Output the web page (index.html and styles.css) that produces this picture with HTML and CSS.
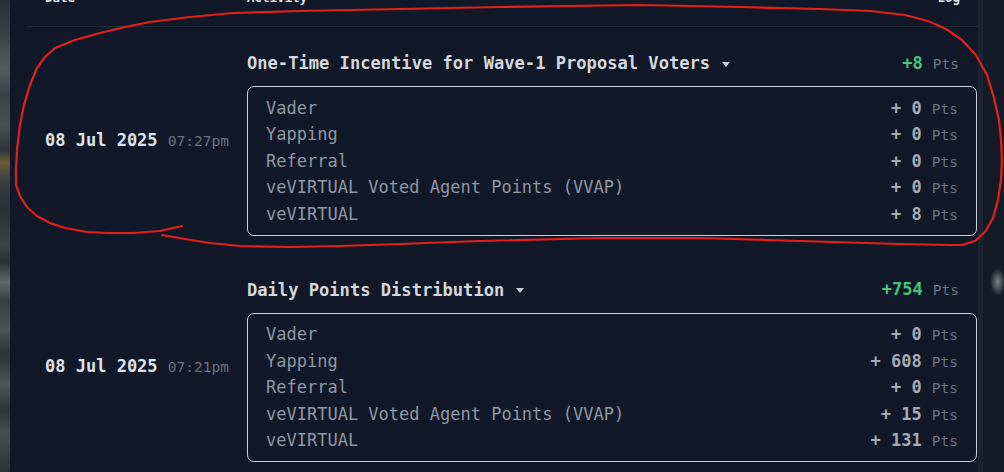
FILE: index.html
```html
<!DOCTYPE html>
<html lang="en">
<head>
<meta charset="utf-8">
<title>Points Log</title>
<link rel="stylesheet" href="styles.css">
</head>
<body>
<div class="page">
  <div class="bleed-left"></div>
  <main class="panel">
    <div class="table">
      <div class="thead">
        <div class="th th-date">Date</div>
        <div class="th th-activity">Activity</div>
        <div class="th th-log">Log</div>
      </div>

      <div class="row">
        <div class="cell-date"><span class="date">08 Jul 2025</span> <span class="time">07:27pm</span></div>
        <div class="cell-activity">
          <div class="act-head">
            <div class="act-title">One-Time Incentive for Wave-1 Proposal Voters<span class="caret"></span></div>
            <div class="act-total"><span class="gain">+8</span><span class="pts">Pts</span></div>
          </div>
          <div class="breakdown">
            <div class="line"><span class="label">Vader</span><span class="amount">+ 0</span><span class="pts">Pts</span></div>
            <div class="line"><span class="label">Yapping</span><span class="amount">+ 0</span><span class="pts">Pts</span></div>
            <div class="line"><span class="label">Referral</span><span class="amount">+ 0</span><span class="pts">Pts</span></div>
            <div class="line"><span class="label">veVIRTUAL Voted Agent Points (VVAP)</span><span class="amount">+ 0</span><span class="pts">Pts</span></div>
            <div class="line"><span class="label">veVIRTUAL</span><span class="amount">+ 8</span><span class="pts">Pts</span></div>
          </div>
        </div>
      </div>

      <div class="row">
        <div class="cell-date"><span class="date">08 Jul 2025</span> <span class="time">07:21pm</span></div>
        <div class="cell-activity">
          <div class="act-head">
            <div class="act-title">Daily Points Distribution<span class="caret"></span></div>
            <div class="act-total"><span class="gain">+754</span><span class="pts">Pts</span></div>
          </div>
          <div class="breakdown">
            <div class="line"><span class="label">Vader</span><span class="amount">+ 0</span><span class="pts">Pts</span></div>
            <div class="line"><span class="label">Yapping</span><span class="amount">+ 608</span><span class="pts">Pts</span></div>
            <div class="line"><span class="label">Referral</span><span class="amount">+ 0</span><span class="pts">Pts</span></div>
            <div class="line"><span class="label">veVIRTUAL Voted Agent Points (VVAP)</span><span class="amount">+ 15</span><span class="pts">Pts</span></div>
            <div class="line"><span class="label">veVIRTUAL</span><span class="amount">+ 131</span><span class="pts">Pts</span></div>
          </div>
        </div>
      </div>
    </div>
  </main>
  <div class="scrollbar"></div>
  <div class="bleed-right"></div>
</div>

<svg class="annotation" width="1004" height="472" viewBox="0 0 1004 472" aria-hidden="true">
  <polyline fill="none" stroke="#e3201b" stroke-width="2.2" stroke-linecap="round" stroke-linejoin="round"
    points="182,226 160,231 133,233 108,233 87,232 65,228 50,223 37,216 27,207 20,196 16,185 16,170 17,150 20,125 24,105 30,85 37,68 45,57 55,48 75,40 100,33 125,27 150,22 190,17 233,13 300,11 400,9 500,7 640,5 740,7 820,9 870,11 905,15 928,21 946,29 962,40 976,55 987,75 994,98 999,120 1001,140 1002,160 1001,180 998,200 993,218 985,232 975,241 962,245 950,245 900,244 800,241 700,238 600,238 480,241 400,244 340,246 290,247 240,246 210,243 185,239 162,235"/>
</svg>
</body>
</html>
```

FILE: styles.css
```css
html, body {
  margin: 0;
  padding: 0;
}

body {
  width: 1004px;
  height: 472px;
  overflow: hidden;
  background: #141a25;
  font-family: "DejaVu Sans Mono", "Liberation Mono", monospace;
  position: relative;
}

.page {
  display: flex;
  height: 472px;
  overflow: hidden;
}

.bleed-left {
  width: 10px;
  flex: none;
  background: linear-gradient(180deg,
    #2b3038 0px, #3a3f47 30px, #555a61 70px, #3c4149 95px,
    #4a4f56 125px, #2f343c 150px, #6b5a35 163px, #3a3f47 180px,
    #2a2f37 210px, #3e434a 245px, #2b3038 262px, #62666c 282px,
    #3a3f46 300px, #4c5057 330px, #2e333b 355px, #4e5259 385px,
    #30353d 410px, #484c53 435px, #2c3139 472px);
  filter: blur(0.6px);
}

.panel {
  width: 951px;
  flex: none;
  padding-left: 17px;
  background: #111827;
}

.scrollbar {
  width: 5px;
  flex: none;
  background: #1b2230;
}

.bleed-right {
  flex: 1;
  background: radial-gradient(ellipse 8px 14px at 70% 282px, #7b8088 0%, rgba(123,128,136,0) 100%), #151b26;
}

.table {
  margin-top: -10px;
}

.thead {
  display: flex;
  align-items: center;
  line-height: 16px;
  padding-bottom: 20px;
  border-bottom: 1px solid #1f2937;
  font-size: 12.5px;
  font-weight: bold;
  color: #e5e7eb;
}

.th-date {
  width: 202px;
  padding-left: 18px;
}

.th-activity {
  flex: 1;
}

.th-log {
  padding-right: 18px;
}

.row {
  display: grid;
  grid-template-columns: 220px 1fr;
  padding: 18px 1px 18px 0;
}

.cell-date {
  align-self: center;
  padding-left: 18px;
  font-size: 17px;
  line-height: 24px;
  white-space: nowrap;
}

.date {
  font-weight: bold;
  color: #dfe3e9;
}

.time {
  font-size: 14.5px;
  color: #6b7280;
}

.act-head {
  display: flex;
  align-items: center;
  justify-content: space-between;
  height: 36px;
  padding-right: 18px;
}

.act-title {
  display: flex;
  align-items: center;
  font-size: 17.1px;
  font-weight: bold;
  color: #d4d8de;
  line-height: 24px;
}

.caret {
  width: 0;
  height: 0;
  margin-left: 12px;
  margin-top: 2px;
  border-left: 4.5px solid transparent;
  border-right: 4.5px solid transparent;
  border-top: 5px solid #c7ccd3;
}

.act-total {
  display: flex;
  align-items: baseline;
  line-height: 24px;
}

.gain {
  font-size: 17px;
  font-weight: bold;
  color: #4ac47a;
}

.pts {
  font-size: 14.5px;
  font-weight: normal;
  color: #6b7280;
  margin-left: 10px;
}

.breakdown {
  margin-top: 5px;
  border: 1px solid #c9d0d9;
  border-radius: 7px;
  padding: 7.5px 18px;
}

.line {
  display: flex;
  align-items: baseline;
  height: 26.5px;
  line-height: 26.5px;
  font-size: 17px;
}

.label {
  flex: 1;
  color: #8f97a3;
}

.amount {
  font-weight: bold;
  color: #a4abb6;
}

.annotation {
  position: absolute;
  left: 0;
  top: 0;
  pointer-events: none;
}
```
